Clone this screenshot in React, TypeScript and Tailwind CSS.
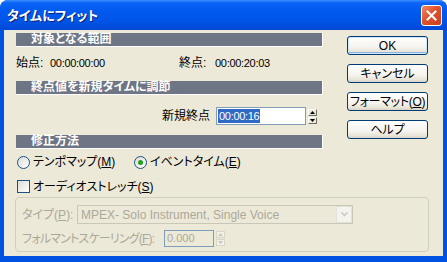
import React from "react";

function Bar({ children }: { children: React.ReactNode }) {
  return (
    <div className="h-[14px] bg-[#6E7585] border-b border-r border-white pl-[15px] text-white font-bold text-[12px] leading-[13px]">
      {children}
    </div>
  );
}

function Btn({ children, def }: { children: React.ReactNode; def?: boolean }) {
  return (
    <div
      className={
        def
          ? "h-[19px] w-[81px] rounded-[3px] border border-[#003C74] bg-[linear-gradient(180deg,#ffffff_0%,#f4f3ee_60%,#e6e3d6_88%,#d6d0c5_100%)] shadow-[inset_0_0_0_1px_#CEE7FF,inset_0_-1px_0_1px_#8DB2E3] flex items-center justify-center text-[12px] leading-none"
          : "h-[19px] w-[81px] rounded-[3px] border border-[#003C74] bg-[linear-gradient(180deg,#ffffff_0%,#f4f3ee_60%,#e6e3d6_88%,#d6d0c5_100%)] flex items-center justify-center text-[12px] leading-none"
      }
    >
      {children}
    </div>
  );
}

function Radio({ checked }: { checked?: boolean }) {
  return (
    <span className="w-[13px] h-[13px] rounded-full border border-[#1C5180] bg-[linear-gradient(135deg,#DCDCD7,#ffffff)] flex items-center justify-center shrink-0">
      {checked && <span className="w-[5px] h-[5px] rounded-full bg-[#21A121]" />}
    </span>
  );
}

function Spin({ disabled }: { disabled?: boolean }) {
  const c = disabled ? "#C9C7BA" : "#000000";
  const box = disabled
    ? "h-[7px] w-[9px] border border-[#D8D5C8] bg-[#F2F1EA] flex items-center justify-center"
    : "h-[7px] w-[9px] border-t border-l border-white border-r border-b border-r-[#716F64] border-b-[#716F64] bg-[#ECE9D8] flex items-center justify-center";
  return (
    <div className="flex flex-col gap-[1px] w-[9px]">
      <div className={box}>
        <svg width="5" height="3" viewBox="0 0 5 3">
          <path d="M2.5 0 L5 3 L0 3 Z" fill={c} />
        </svg>
      </div>
      <div className={box}>
        <svg width="5" height="3" viewBox="0 0 5 3">
          <path d="M0 0 L5 0 L2.5 3 Z" fill={c} />
        </svg>
      </div>
    </div>
  );
}

export default function App() {
  return (
    <div className="w-[447px] h-[262px] rounded-t-[8px] bg-[#0052E0] flex flex-col overflow-hidden font-['Liberation_Sans','Noto_Sans_CJK_JP',sans-serif] [font-feature-settings:'palt'] text-black">
      {/* Title bar */}
      <div className="h-[30px] shrink-0 bg-[linear-gradient(180deg,#3D8EFF_0%,#0A64F6_10%,#0058EE_40%,#0055E8_70%,#0047D6_100%)] flex items-center pl-[7px] pr-[5px]">
        <span className="text-white font-bold text-[13px] leading-none [text-shadow:1px_1px_0_#0A1E70] mt-[1px]">
          タイムにフィット
        </span>
        <div className="ml-auto w-[21px] h-[21px] rounded-[3px] border border-white bg-[linear-gradient(135deg,#F08A6A_0%,#E0512B_45%,#C8401E_100%)] flex items-center justify-center">
          <svg width="11" height="11" viewBox="0 0 11 11">
            <path d="M1.5 1.5 L9.5 9.5 M9.5 1.5 L1.5 9.5" stroke="#ffffff" strokeWidth="2" strokeLinecap="square" />
          </svg>
        </div>
      </div>

      {/* Client area */}
      <div className="flex-1 mx-[4px] mb-[6px] bg-[#ECE9D8] flex flex-col text-[12px]">
        <div className="flex pl-[12px]">
          {/* Left column */}
          <div className="w-[307px] flex flex-col pt-[3px]">
            <Bar>対象となる範囲</Bar>
            <div className="flex items-center h-[14px] mt-[9px] leading-none">
              <div className="w-[163px] flex items-center">
                <span className="w-[34px]">始点:</span>
                <span className="text-[11px] tracking-[-0.3px]">00:00:00:00</span>
              </div>
              <span className="w-[36px]">終点:</span>
              <span className="text-[11px] tracking-[-0.3px]">00:00:20:03</span>
            </div>
            <div className="mt-[11px]">
              <Bar>終点値を新規タイムに調節</Bar>
            </div>
            <div className="flex items-center justify-end h-[18px] mt-[12px] pr-[6px]">
              <span className="mr-[6px]">新規終点</span>
              <div className="w-[90px] h-[18px] border border-[#7F9DB9] bg-white flex items-center pl-[1px]">
                <span className="bg-[#316AC5] text-white text-[11px] tracking-[-0.3px] leading-[14px] px-[1px]">00:00:16</span>
              </div>
              <div className="ml-[2px]">
                <Spin />
              </div>
            </div>
            <div className="mt-[10px]">
              <Bar>修正方法</Bar>
            </div>
            <div className="flex items-center h-[14px] mt-[6px] pl-[1px]">
              <div className="w-[117px] flex items-center">
                <Radio />
                <span className="ml-[3px] whitespace-nowrap">
                  テンポマップ(<span className="underline">M</span>)
                </span>
              </div>
              <Radio checked />
              <span className="ml-[3px] whitespace-nowrap">
                イベントタイム(<span className="underline">E</span>)
              </span>
            </div>
            <div className="flex items-center h-[13px] mt-[11px] pl-[1px]">
              <span className="w-[13px] h-[13px] border border-[#1C5180] bg-[linear-gradient(135deg,#DCDCD7,#ffffff)] shrink-0" />
              <span className="ml-[3px]">
                オーディオストレッチ(<span className="underline">S</span>)
              </span>
            </div>
          </div>
          {/* Right column */}
          <div className="ml-[24px] flex flex-col gap-[9px] pt-[6px]">
            <Btn def>OK</Btn>
            <Btn>キャンセル</Btn>
            <Btn>
              <span className="tracking-[-0.3px]">
                フォーマット(<span className="underline">O</span>)
              </span>
            </Btn>
            <Btn>ヘルプ</Btn>
          </div>
        </div>

        {/* Group box */}
        <div className="ml-[11px] mt-[4px] w-[414px] h-[55px] rounded-[4px] border border-[#D0D0BF] flex flex-col pl-[6px] text-[#ACA899]">
          <div className="flex items-center h-[19px] mt-[7px]">
            <span className="w-[55px] whitespace-nowrap">
              タイプ(<span className="underline">P</span>):
            </span>
            <div className="w-[276px] h-[19px] border border-[#C9C7BA] bg-[#ECE9D8] flex items-center pl-[3px]">
              <span className="flex-1 text-[12px] leading-none whitespace-nowrap">MPEX- Solo Instrument, Single Voice</span>
              <div className="w-[16px] h-[17px] border border-[#E3E2DA] bg-[#F4F3EE] flex items-center justify-center">
                <svg width="7" height="5" viewBox="0 0 7 5">
                  <path d="M0.5 0.5 L3.5 3.5 L6.5 0.5" stroke="#C9C7BA" strokeWidth="1.5" fill="none" />
                </svg>
              </div>
            </div>
          </div>
          <div className="flex items-center h-[17px] mt-[6px]">
            <span className="w-[142px] whitespace-nowrap tracking-[-0.8px]">
              フォルマントスケーリング(<span className="underline">F</span>):
            </span>
            <div className="w-[50px] h-[17px] border border-[#7F9DB9] bg-[#ECE9D8] flex items-center pl-[2px] text-[11px]">
              0.000
            </div>
            <div className="ml-[2px]">
              <Spin disabled />
            </div>
          </div>
        </div>
      </div>
    </div>
  );
}
